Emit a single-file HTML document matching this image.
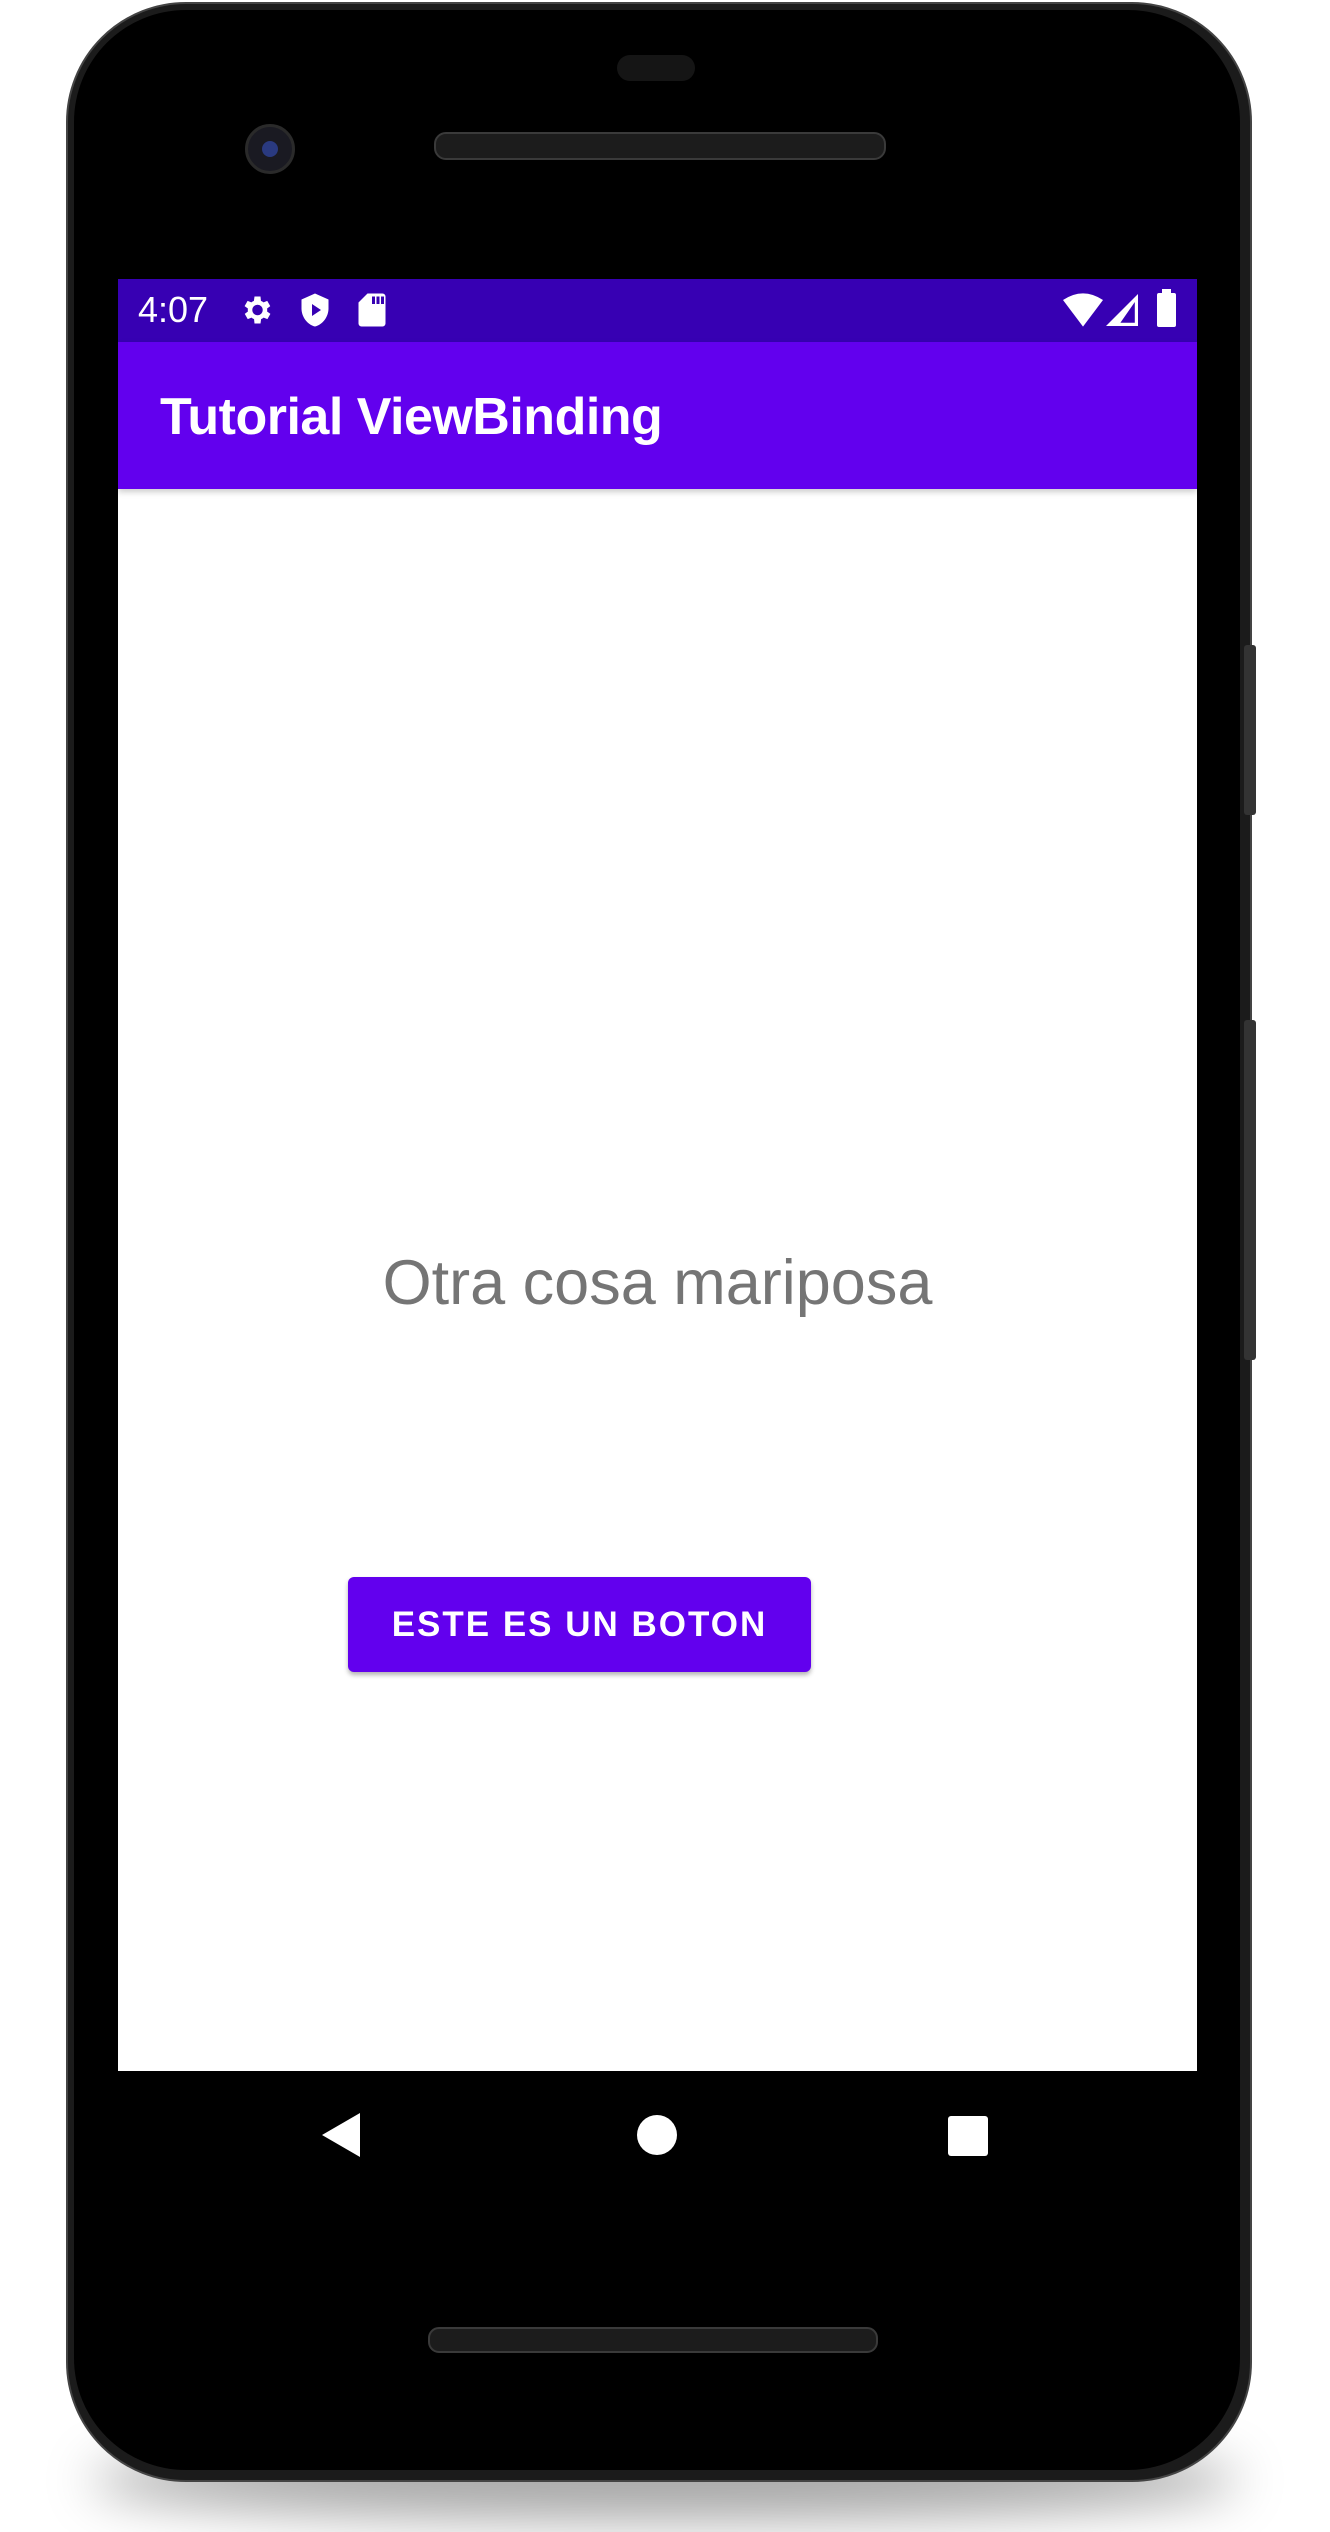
<!DOCTYPE html>
<html><head><meta charset="utf-8"><style>
html,body{margin:0;padding:0;background:#fff;width:1330px;height:2532px;overflow:hidden;position:relative;font-family:"Liberation Sans",sans-serif}
.abs{position:absolute}
</style></head><body>
<div class="abs" style="left:90px;top:2440px;width:1150px;height:80px;border-radius:50%;background:rgba(0,0,0,0.35);filter:blur(25px)"></div>
<div class="abs" style="left:66px;top:2px;width:1182px;height:2476px;border-radius:120px;background:#1b1b1b;border:2px solid #444"></div>
<div class="abs" style="left:74px;top:10px;width:1166px;height:2460px;border-radius:112px;background:#000"></div>
<div class="abs" style="left:1244px;top:645px;width:12px;height:170px;background:#333;border-radius:3px"></div>
<div class="abs" style="left:1244px;top:1020px;width:12px;height:340px;background:#333;border-radius:3px"></div>
<div class="abs" style="left:617px;top:55px;width:78px;height:26px;border-radius:13px;background:#151515"></div>
<div class="abs" style="left:434px;top:132px;width:448px;height:24px;border-radius:12px;background:#1c1c1c;border:2px solid #3a3a3a"></div>
<div class="abs" style="left:245px;top:124px;width:50px;height:50px;border-radius:50%;background:#1a1a22;border:3px solid #2a2a2a;box-sizing:border-box"></div>
<div class="abs" style="left:262px;top:141px;width:16px;height:16px;border-radius:50%;background:#2a3a80"></div>
<div class="abs" style="left:118px;top:279px;width:1079px;height:1792px;background:#fff"></div>
<div class="abs" style="left:118px;top:279px;width:1079px;height:63px;background:#3700b3"></div>
<div class="abs" style="left:138px;top:288px;color:#fff;font-size:36px;line-height:44px">4:07</div>
<svg class="abs" style="left:238px;top:292px" width="36" height="36" viewBox="0 0 24 24"><path fill="#fff" d="M19.4 13a7.5 7.5 0 0 0 0-2l2.1-1.6-2-3.5-2.5 1a7 7 0 0 0-1.7-1L15 3h-4l-.4 2.9a7 7 0 0 0-1.7 1l-2.5-1-2 3.5L6.6 11a7.5 7.5 0 0 0 0 2l-2.1 1.6 2 3.5 2.5-1a7 7 0 0 0 1.7 1L11 21h4l.4-2.9a7 7 0 0 0 1.7-1l2.5 1 2-3.5zM13 15.5a3.5 3.5 0 1 1 0-7 3.5 3.5 0 0 1 0 7z"/></svg>
<svg class="abs" style="left:297px;top:291px" width="36" height="38" viewBox="0 0 24 24"><path fill="#fff" d="M12 1 3 5v6c0 5.5 3.8 10.7 9 12 5.2-1.3 9-6.5 9-12V5zm-2 15V8l6 4z"/></svg>
<svg class="abs" style="left:357px;top:292px" width="30" height="36" viewBox="0 0 20 24"><path fill="#fff" d="M7 1h10a2 2 0 0 1 2 2v18a2 2 0 0 1-2 2H3a2 2 0 0 1-2-2V7zm3 2v5h2V3zm3 0v5h2V3zm3 0v5h2V3z"/></svg>
<svg class="abs" style="left:1063px;top:293px" width="40" height="34" viewBox="0 0 24 20"><path fill="#fff" d="M12 20 0 4Q12-4 24 4z"/></svg>
<svg class="abs" style="left:1106px;top:293px" width="32" height="34" viewBox="0 0 20 20"><path fill="#fff" d="M20 0v20H0zM18 5 9 18h9z"/></svg>
<div class="abs" style="left:1157px;top:293px;width:19px;height:34px;background:#fff;border-radius:2px"></div>
<div class="abs" style="left:1162px;top:289px;width:9px;height:5px;background:#fff"></div>
<div class="abs" style="left:118px;top:342px;width:1079px;height:147px;background:#6200ee;box-shadow:0 3px 6px rgba(0,0,0,0.2)"></div>
<div class="abs" style="left:160px;top:385px;color:#fff;font-size:52px;line-height:64px;font-weight:bold;letter-spacing:-0.5px">Tutorial ViewBinding</div>
<div class="abs" style="left:118px;top:1245px;width:1079px;text-align:center;color:#757575;font-size:63px;line-height:76px">Otra cosa mariposa</div>
<div class="abs" style="left:348px;top:1577px;width:463px;height:95px;background:#6200ee;border-radius:6px;box-shadow:0 3px 5px rgba(0,0,0,0.3);color:#fff;font-size:35px;font-weight:bold;letter-spacing:2px;line-height:95px;text-align:center">ESTE ES UN BOTON</div>
<svg class="abs" style="left:322px;top:2113px" width="40" height="44" viewBox="0 0 20 22"><path fill="#fff" d="M19 0v22L0 11z"/></svg>
<div class="abs" style="left:637px;top:2115px;width:40px;height:40px;border-radius:50%;background:#fff"></div>
<div class="abs" style="left:948px;top:2116px;width:40px;height:40px;border-radius:3px;background:#fff"></div>
<div class="abs" style="left:428px;top:2327px;width:446px;height:22px;border-radius:11px;background:#1c1c1c;border:2px solid #3a3a3a"></div>
</body></html>
